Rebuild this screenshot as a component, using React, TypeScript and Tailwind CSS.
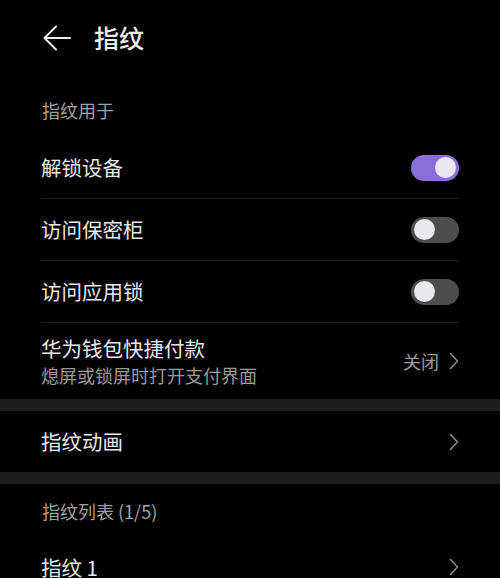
import React from "react";

const font = { fontFamily: '"Noto Sans CJK SC", "Noto Sans", sans-serif' };

function Chevron() {
  return (
    <svg width="10" height="18" viewBox="0 0 10 18" fill="none">
      <path d="M1.5 1.5 L8.5 9 L1.5 16.5" stroke="#8a8a8a" strokeWidth="1.6" strokeLinecap="round" strokeLinejoin="round" />
    </svg>
  );
}

function Toggle({ on }: { on: boolean }) {
  return (
    <div
      className={`flex h-[26px] w-[48px] items-center rounded-full px-[3px] ${
        on ? "justify-end bg-[#8b6fd9]" : "justify-start bg-[#4d4d4d]"
      }`}
    >
      <div className="h-[21px] w-[21px] rounded-full bg-[#e9e8ee]" />
    </div>
  );
}

function SwitchRow({ label, on, border = true }: { label: string; on: boolean; border?: boolean }) {
  return (
    <div className={`mx-[41px] flex h-[62px] items-center justify-between ${border ? "border-b border-[#1e1e1e]" : ""}`}>
      <span className="text-[20.5px] text-[#e8e8e8]">{label}</span>
      <Toggle on={on} />
    </div>
  );
}

export default function App() {
  return (
    <div className="h-[578px] w-[500px] overflow-hidden bg-black" style={font}>
      <div className="flex h-[76px] items-center pl-[43px]">
        <svg width="28" height="26" viewBox="0 0 28 26" fill="none">
          <path d="M1.5 13 H27 M13 1.5 L1.5 13 L13 24.5" stroke="#ececec" strokeWidth="2" strokeLinecap="round" strokeLinejoin="round" />
        </svg>
        <span className="ml-[23px] text-[25px] font-medium text-[#f0f0f0]">指纹</span>
      </div>
      <div className="flex h-[61px] items-center pl-[42px] pt-[7px]">
        <span className="text-[18px] text-[#a0a0a0]">指纹用于</span>
      </div>
      <SwitchRow label="解锁设备" on={true} />
      <SwitchRow label="访问保密柜" on={false} />
      <SwitchRow label="访问应用锁" on={false} />
      <div className="mx-[41px] flex h-[76px] items-center justify-between">
        <div className="flex flex-col">
          <span className="text-[20.5px] leading-[28px] text-[#e8e8e8]">华为钱包快捷付款</span>
          <span className="text-[18px] leading-[26px] text-[#9a9a9a]">熄屏或锁屏时打开支付界面</span>
        </div>
        <div className="flex items-center gap-[10px]">
          <span className="text-[18px] text-[#9a9a9a]">关闭</span>
          <Chevron />
        </div>
      </div>
      <div className="h-[12px] bg-[#1c1c1c]" />
      <div className="mx-[41px] flex h-[61px] items-center justify-between">
        <span className="text-[20.5px] text-[#e8e8e8]">指纹动画</span>
        <Chevron />
      </div>
      <div className="h-[12px] bg-[#1c1c1c]" />
      <div className="flex h-[52px] items-center pl-[42px] pt-[2px]">
        <span className="text-[18px] text-[#a0a0a0]">指纹列表 (1/5)</span>
      </div>
      <div className="mx-[41px] flex h-[62px] items-center justify-between">
        <span className="text-[20.5px] text-[#e8e8e8]">指纹 1</span>
        <Chevron />
      </div>
    </div>
  );
}
